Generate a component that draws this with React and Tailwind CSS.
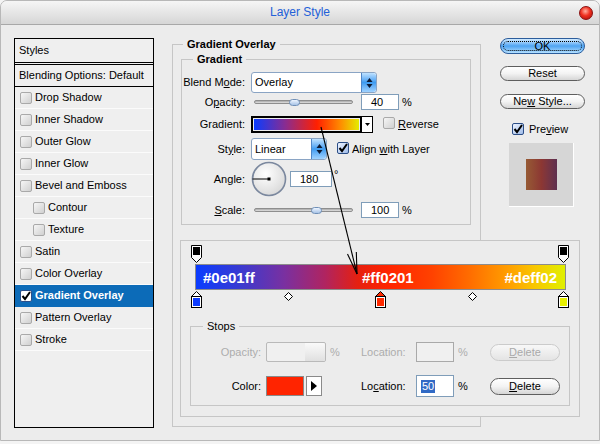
import React from "react";

const styleItems = [
  { name: "Drop Shadow" },
  { name: "Inner Shadow" },
  { name: "Outer Glow" },
  { name: "Inner Glow" },
  { name: "Bevel and Emboss" },
  { name: "Contour", indent: true },
  { name: "Texture", indent: true },
  { name: "Satin" },
  { name: "Color Overlay" },
  { name: "Gradient Overlay", selected: true },
  { name: "Pattern Overlay" },
  { name: "Stroke" },
];

const BAR =
  "linear-gradient(to right, #0a3cff 0%, #3a3ad0 12%, #7a30a0 24%, #b02460 35%, #e6200f 44%, #ff2400 52%, #ff4200 64%, #ff6c00 74%, #ffa000 85%, #f8c800 92%, #e0f000 100%)";

function CheckBox({ checked = false, light = false }) {
  return (
    <span
      className={
        checked
          ? light
            ? "inline-flex h-[12px] w-[12px] shrink-0 items-center justify-center rounded-[2px] border border-[#2a4f8a] bg-white"
            : "inline-flex h-[12px] w-[12px] shrink-0 items-center justify-center rounded-[2px] border border-[#2b4d86] bg-gradient-to-br from-[#eef4ff] to-[#9fbbe8]"
          : "inline-flex h-[12px] w-[12px] shrink-0 rounded-[2px] border border-[#a9a9a9] bg-gradient-to-br from-[#f6f6f6] to-[#d0d0d0]"
      }
    >
      {checked && (
        <svg width="10" height="10" viewBox="0 0 10 10">
          <path d="M1.5 5 L4 8 L9 1" fill="none" stroke="#000" strokeWidth="2" />
        </svg>
      )}
    </span>
  );
}

function U({ children }) {
  return <span className="underline underline-offset-[1px]">{children}</span>;
}

function SelectSpin() {
  return (
    <span className="flex h-full w-[15px] items-center justify-center rounded-r-[3px] border-l border-[#4f86c8] bg-gradient-to-b from-[#bfe2ff] via-[#3d9bf0] to-[#9fd2ff]">
      <svg width="7" height="12" viewBox="0 0 7 12">
        <path d="M3.5 1 L6.5 5 H0.5 Z" fill="#0d1a33" />
        <path d="M3.5 11 L6.5 7 H0.5 Z" fill="#0d1a33" />
      </svg>
    </span>
  );
}

function Slider({ at }) {
  return (
    <div className="relative ml-[3px] h-[16px] w-[99px]">
      <div className="absolute left-0 right-0 top-[6px] h-[4px] rounded-full border border-[#8e8e8e] bg-gradient-to-b from-[#a8a8a8] to-[#e2e2e2]" />
      <div
        className="absolute top-[5px] h-[7px] w-[11px] rounded-[5px] border border-[#7090b8] bg-gradient-to-b from-[#eef5ff] to-[#a7c3e6]"
        style={{ left: at }}
      />
    </div>
  );
}

function Field({ value, className = "" }) {
  return (
    <div className={`flex h-[16px] items-center border border-[#7f9db9] bg-white pl-[9px] ${className}`}>
      {value}
    </div>
  );
}

function Pill({ children, disabled = false, className = "" }) {
  return (
    <div
      className={
        (disabled
          ? "flex items-center justify-center rounded-full border border-[#cbcbcb] bg-gradient-to-b from-[#f8f8f8] to-[#e4e4e4] text-[#a9a9a9] "
          : "flex items-center justify-center rounded-full border border-[#5e5e5e] bg-gradient-to-b from-white via-[#f3f3f3] to-[#d6d6d6] text-black ") +
        className
      }
    >
      {children}
    </div>
  );
}

function OpacityStop() {
  return (
    <svg className="block" width="11" height="18" viewBox="0 0 11 18">
      <path d="M0.5 0.5 H10.5 V12.5 L5.5 17.5 L0.5 12.5 Z" fill="#fff" stroke="#000" />
      <rect x="2" y="2" width="7" height="8" fill="#000" />
    </svg>
  );
}

function ColorStop({ color, active = false }) {
  return (
    <svg className="block" width="11" height="17" viewBox="0 0 11 17">
      <path d="M5.5 0.5 L10.5 5.5 V16.5 H0.5 V5.5 Z" fill={active ? color : "#fff"} stroke="#000" />
      <rect x="0.5" y="5.5" width="10" height="11" fill="#fff" stroke="#000" />
      <rect x="2" y="7" width="7" height="8" fill={color} />
    </svg>
  );
}

function Diamond() {
  return (
    <svg className="block" width="9" height="9" viewBox="0 0 9 9">
      <path d="M4.5 0.5 L8.5 4.5 L4.5 8.5 L0.5 4.5 Z" fill="#fff" stroke="#000" />
    </svg>
  );
}

function TitleBar() {
  return (
    <div className="flex h-[24px] shrink-0 items-center rounded-t-[6px] border-b border-[#a8a8a8] bg-gradient-to-b from-[#f6f6f6] to-[#d6d6d6]">
      <div className="w-[20px]" />
      <div className="flex-1 text-center text-[12px] text-[#2360d8]">Layer Style</div>
      <div className="mr-[6px] h-[14px] w-[14px] rounded-full border border-[#8a1010] bg-[radial-gradient(circle_at_45%_35%,#ffb0a0_0%,#f03020_45%,#a00c08_100%)]" />
    </div>
  );
}

function StylesList() {
  return (
    <div className="ml-[13px] mt-[13px] h-[390px] w-[140px] border border-black bg-[#efefef]">
      <div className="flex h-[24px] items-center border-b border-black pl-[4px]">Styles</div>
      <div className="mt-[1px] flex h-[23px] items-center border-y border-black pl-[4px]">
        Blending Options: Default
      </div>
      {styleItems.map((it) => (
        <div
          key={it.name}
          className={
            (it.selected
              ? "flex h-[22px] items-center gap-[3px] border-b border-[#0c6bb8] bg-[#0c6bb8] font-bold text-white "
              : "flex h-[22px] items-center gap-[3px] border-b border-[#fbfbfb] ") +
            (it.indent ? "pl-[18px]" : "pl-[5px]")
          }
        >
          <CheckBox checked={!!it.selected} light />
          <span>{it.name}</span>
        </div>
      ))}
    </div>
  );
}

function GradientOverlay() {
  return (
    <fieldset className="ml-[18px] mt-[13px] h-[389px] w-[309px] border border-[#c6c6c6]">
      <legend className="ml-[10px] px-[4px] font-bold leading-[13px]">Gradient Overlay</legend>
      <fieldset className="ml-[8px] mt-[2px] h-[172px] w-[290px] border border-[#c6c6c6]">
        <legend className="ml-[11px] px-[4px] font-bold leading-[13px]">Gradient</legend>

        <div className="mt-[6px] flex h-[21px] items-center">
          <span className="mr-[6px] w-[63px] text-right">
            Blend M<U>o</U>de:
          </span>
          <div className="flex h-[21px] w-[126px] items-center justify-between rounded-[3px] border border-[#8aa4c4] bg-white pl-[3px]">
            <span>Overlay</span>
            <SelectSpin />
          </div>
        </div>

        <div className="mt-[1px] flex h-[16px] items-center">
          <span className="mr-[6px] w-[63px] text-right">
            O<U>p</U>acity:
          </span>
          <Slider at={35} />
          <Field value="40" className="ml-[8px] w-[38px]" />
          <span className="ml-[3px]">%</span>
        </div>

        <div className="mt-[6px] flex h-[16px] items-center">
          <span className="mr-[6px] w-[63px] text-right">Gradient:</span>
          <div className="h-[17px] w-[111px] border-2 border-black p-px">
            <div className="h-full w-full" style={{ background: "linear-gradient(to right, #0a3cff 0%, #8a2c90 30%, #ff2000 60%, #ff8a00 82%, #e4ec00 100%)" }} />
          </div>
          <div className="flex h-[17px] w-[11px] items-center justify-center border-y border-r border-black bg-white">
            <svg width="5" height="3" viewBox="0 0 5 3">
              <path d="M0 0 H5 L2.5 3 Z" fill="#000" />
            </svg>
          </div>
          <span className="ml-[10px]">
            <CheckBox />
          </span>
          <span className="ml-[3px]">
            <U>R</U>everse
          </span>
        </div>

        <div className="mt-[6px] flex h-[22px] items-center">
          <span className="mr-[6px] w-[63px] text-right">
            St<U>y</U>le:
          </span>
          <div className="flex h-[22px] w-[76px] items-center justify-between rounded-[3px] border border-[#8aa4c4] bg-white pl-[3px]">
            <span>Linear</span>
            <SelectSpin />
          </div>
          <span className="ml-[10px]">
            <CheckBox checked />
          </span>
          <span className="ml-[3px]">
            Align <U>w</U>ith Layer
          </span>
        </div>

        <div className="mt-[2px] flex h-[34px] items-center">
          <span className="mr-[6px] w-[63px] text-right">
            An<U>g</U>le:
          </span>
          <svg width="36" height="36" viewBox="0 0 36 36">
            <defs>
              <radialGradient id="dial" cx="40%" cy="35%" r="70%">
                <stop offset="0%" stopColor="#ffffff" />
                <stop offset="100%" stopColor="#d8d8d8" />
              </radialGradient>
            </defs>
            <circle cx="18" cy="18" r="16.5" fill="url(#dial)" stroke="#7b889e" strokeWidth="1.6" />
            <line x1="1.5" y1="18" x2="18" y2="18" stroke="#000" strokeWidth="1" />
            <rect x="16.5" y="16.5" width="3" height="3" fill="#000" />
          </svg>
          <Field value="180" className="ml-[3px] w-[42px] pl-[5px]" />
          <span className="mb-[10px] ml-[2px]">°</span>
        </div>

        <div className="mt-[6px] flex h-[16px] items-center">
          <span className="mr-[6px] w-[63px] text-right">
            <U>S</U>cale:
          </span>
          <Slider at={57} />
          <Field value="100" className="ml-[8px] w-[38px] pl-[6px]" />
          <span className="ml-[3px]">%</span>
        </div>
      </fieldset>
    </fieldset>
  );
}

function RightColumn() {
  return (
    <div className="ml-[19px] mt-[13px] flex flex-col">
      <div className="relative flex h-[16px] w-[85px] items-center justify-center rounded-full border border-[#2c5d9c] bg-gradient-to-b from-[#d4ecff] via-[#4ea4f2] to-[#b3e0ff]">
        <span className="absolute inset-[2px] rounded-full border border-dotted border-black" />
        <span>OK</span>
      </div>
      <Pill className="mt-[12px] h-[15px] w-[85px]">Reset</Pill>
      <Pill className="mt-[13px] h-[15px] w-[85px]">
        Ne<U>w</U>&nbsp;Style...
      </Pill>
      <div className="ml-[12px] mt-[14px] flex h-[12px] items-center gap-[5px]">
        <CheckBox checked />
        <span>
          Pre<U>v</U>iew
        </span>
      </div>
      <div className="ml-[9px] mt-[8px] flex h-[64px] w-[65px] items-center justify-center border-b border-r border-white bg-[#d6d6d6]">
        <div className="h-[31px] w-[31px] bg-gradient-to-r from-[#965a34] via-[#8c3733] to-[#5e2f4f]" />
      </div>
    </div>
  );
}

function GradientEditor() {
  return (
    <div className="absolute left-[180px] top-[240px] flex h-[177px] w-[400px] flex-col border border-[#c6c6c6] bg-[#ececec]">
      <div className="relative ml-[14px] mt-[4px] flex h-[67px] w-[371px] flex-col pt-[19px]">
        <div className="absolute left-[-4px] top-0">
          <OpacityStop />
        </div>
        <div className="absolute left-[363px] top-0">
          <OpacityStop />
        </div>
        <div className="absolute left-[-4px] top-[46px]">
          <ColorStop color="#0d3cff" />
        </div>
        <div className="absolute left-[180px] top-[46px]">
          <ColorStop color="#ff2a00" active />
        </div>
        <div className="absolute left-[363px] top-[46px]">
          <ColorStop color="#e8f000" />
        </div>
        <div className="absolute left-[89px] top-[47px]">
          <Diamond />
        </div>
        <div className="absolute left-[273px] top-[47px]">
          <Diamond />
        </div>
        <div
          className="grid h-[26px] grid-cols-[166px_1fr_auto] items-center border border-[#8c8c8c] text-[15px] font-bold leading-[17px] text-white"
          style={{ background: BAR }}
        >
          <span className="pl-[7px]">#0e01ff</span>
          <span>#ff0201</span>
          <span className="pr-[8px]">#deff02</span>
        </div>
      </div>

      <fieldset className="ml-[9px] mt-[8px] h-[86px] w-[380px] border border-[#c6c6c6]">
        <legend className="ml-[12px] px-[4px] leading-[13px]">Stops</legend>

        <div className="mt-[9px] flex h-[20px] items-center text-[#acacac]">
          <span className="mr-[5px] w-[70px] text-right">Opacity:</span>
          <div className="flex h-[20px] w-[60px] justify-end rounded-[2px] border border-[#b9b9b9] bg-[#f0f0f0]">
            <span className="h-full w-[20px] rounded-r-[2px] bg-gradient-to-b from-[#fafafa] to-[#e0e0e0]" />
          </div>
          <span className="ml-[4px] w-[31px]">%</span>
          <span className="w-[55px]">Location:</span>
          <div className="h-[20px] w-[38px] border border-[#a9a9a9] bg-[#f0f0f0]" />
          <span className="ml-[4px] w-[32px]">%</span>
          <Pill disabled className="h-[17px] w-[70px]">
            <U>D</U>elete
          </Pill>
        </div>

        <div className="mt-[13px] flex h-[22px] items-center">
          <span className="mr-[5px] w-[70px] text-right">Color:</span>
          <div className="h-[20px] w-[38px] border border-[#8a8a8a] bg-[#ff2400]" />
          <div className="ml-[2px] flex h-[20px] w-[16px] items-center justify-center border border-[#8a8a8a] bg-white">
            <svg width="6" height="10" viewBox="0 0 6 10">
              <path d="M0 0 L6 5 L0 10 Z" fill="#000" />
            </svg>
          </div>
          <span className="ml-[39px] w-[55px]">
            Lo<U>c</U>ation:
          </span>
          <div className="flex h-[22px] w-[38px] items-center border border-[#7f9db9] bg-white pl-[4px]">
            <span className="bg-[#316ac5] px-px text-white">50</span>
          </div>
          <span className="ml-[4px] w-[32px]">%</span>
          <Pill className="h-[17px] w-[70px]">
            <U>D</U>elete
          </Pill>
        </div>
      </fieldset>
    </div>
  );
}

function Arrow() {
  return (
    <svg className="pointer-events-none absolute left-0 top-0" width="600" height="444" viewBox="0 0 600 444">
      <line x1="321" y1="127" x2="357" y2="274" stroke="#000" strokeWidth="1.1" />
      <line x1="357" y1="274" x2="347.5" y2="254" stroke="#000" strokeWidth="1.1" />
      <line x1="357" y1="274" x2="356.3" y2="252" stroke="#000" strokeWidth="1.1" />
    </svg>
  );
}

export default function App() {
  return (
    <div className="relative h-[444px] w-[600px] overflow-hidden bg-[#f4f4f4] font-['Liberation_Sans',Arial,sans-serif] text-[11px] leading-[13px] text-black">
      <div className="flex h-[441px] flex-col rounded-t-[7px] border border-[#b8b8b8] bg-[#ececec]">
        <TitleBar />
        <div className="flex items-start">
          <StylesList />
          <GradientOverlay />
          <RightColumn />
        </div>
      </div>
      <GradientEditor />
      <Arrow />
    </div>
  );
}
